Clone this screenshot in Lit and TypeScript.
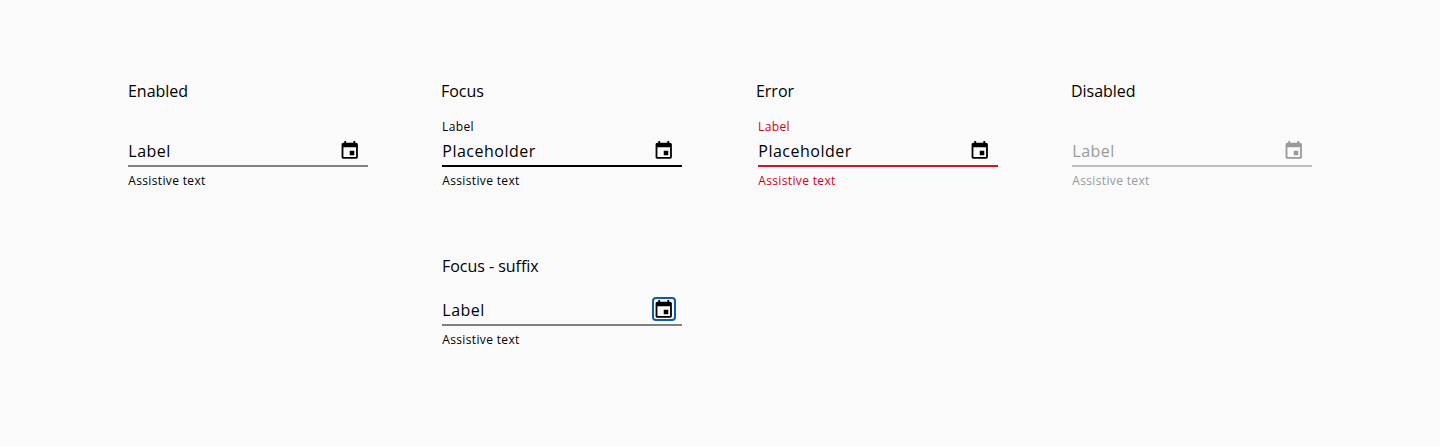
import { LitElement, html, css } from 'lit';
import { customElement, property } from 'lit/decorators.js';
import { classMap } from 'lit/directives/class-map.js';

@customElement('date-field')
class DateField extends LitElement {
  @property() heading = '';
  @property() variant = 'enabled';

  static styles = css`
    :host { display: block; width: 242px; }
    .heading { font-size: 16px; line-height: 24px; height: 24px; letter-spacing: -0.03px; white-space: pre; }
    .heading.enabled, .heading.suffix { padding-left: 1px; }
    .heading.error { margin-left: -1px; }
    .field { padding-left: 1px; color: #000; }
    .float { height: 16px; margin-top: 16px; font-size: 12px; line-height: 16px; letter-spacing: 0.37px; }
    .short .float { height: 0; }
    .row { display: flex; align-items: center; justify-content: space-between; width: 240px; height: 32px; box-sizing: border-box; border-bottom: 2px solid #000; padding: 2px 6px 0 0; }
    .value { padding-left: 0.3px; font-size: 16px; line-height: 24px; letter-spacing: 0.5px; }
    .icon { width: 24px; height: 24px; margin-bottom: 2px; box-sizing: border-box; display: flex; align-items: center; justify-content: center; border: 2px solid transparent; border-radius: 4px; }
    svg { width: 24px; height: 24px; flex: none; fill: currentColor; display: block; }
    .help { margin-top: 6px; padding-left: 0.3px; font-size: 12px; line-height: 16px; letter-spacing: 0.35px; }
    .field.enabled .row, .field.suffix .row { border-bottom-color: #7f7f7f; }
    .suffix .icon { border-color: #0f5ba7; }
    .error .float, .error .help { color: #d0011b; }
    .error .row { border-bottom-color: #cc1424; }
    .field.disabled { color: #999; }
    .disabled .row { border-bottom-color: #bfbfbf; }
  `;

  render() {
    const floating = this.variant === 'focus' || this.variant === 'error';
    return html`
      <div class=${classMap({ heading: true, [this.variant]: true })}>${this.heading}</div>
      <div class=${classMap({ field: true, [this.variant]: true, short: this.variant === 'suffix' })}>
        <div class="float">${floating ? 'Label' : ''}</div>
        <div class="row">
          <span class="value">${floating ? 'Placeholder' : 'Label'}</span>
          <span class="icon"><svg viewBox="0 0 24 24"><path transform="translate(3.6 3) scale(.905 .89) translate(-3 -1)" d="M17 12h-5v5h5v-5zM16 1v2H8V1H6v2H5c-1.11 0-1.99.9-1.99 2L3 19c0 1.1.89 2 2 2h14c1.1 0 2-.9 2-2V5c0-1.1-.9-2-2-2h-1V1h-2zm3 18H5V8h14v11z"/></svg></span>
        </div>
        <div class="help">Assistive text</div>
      </div>`;
  }
}

@customElement('app-root')
class AppRoot extends LitElement {
  static styles = css`
    :host { display: block; box-sizing: border-box; height: 446px; padding: 79px 0 0 127px; background: #fafafa; color: #000; font-family: "Open Sans", "Noto Sans", sans-serif; }
    .grid { display: grid; grid-template-columns: 314px 316px 314px 242px; row-gap: 65px; }
    .second { grid-column: 2; }
  `;

  render() {
    return html`<div class="grid">
      <date-field heading="Enabled" variant="enabled"></date-field>
      <date-field heading="Focus" variant="focus"></date-field>
      <date-field heading="Error" variant="error"></date-field>
      <date-field heading="Disabled" variant="disabled"></date-field>
      <date-field class="second" heading="Focus - suffix" variant="suffix"></date-field>
    </div>`;
  }
}
